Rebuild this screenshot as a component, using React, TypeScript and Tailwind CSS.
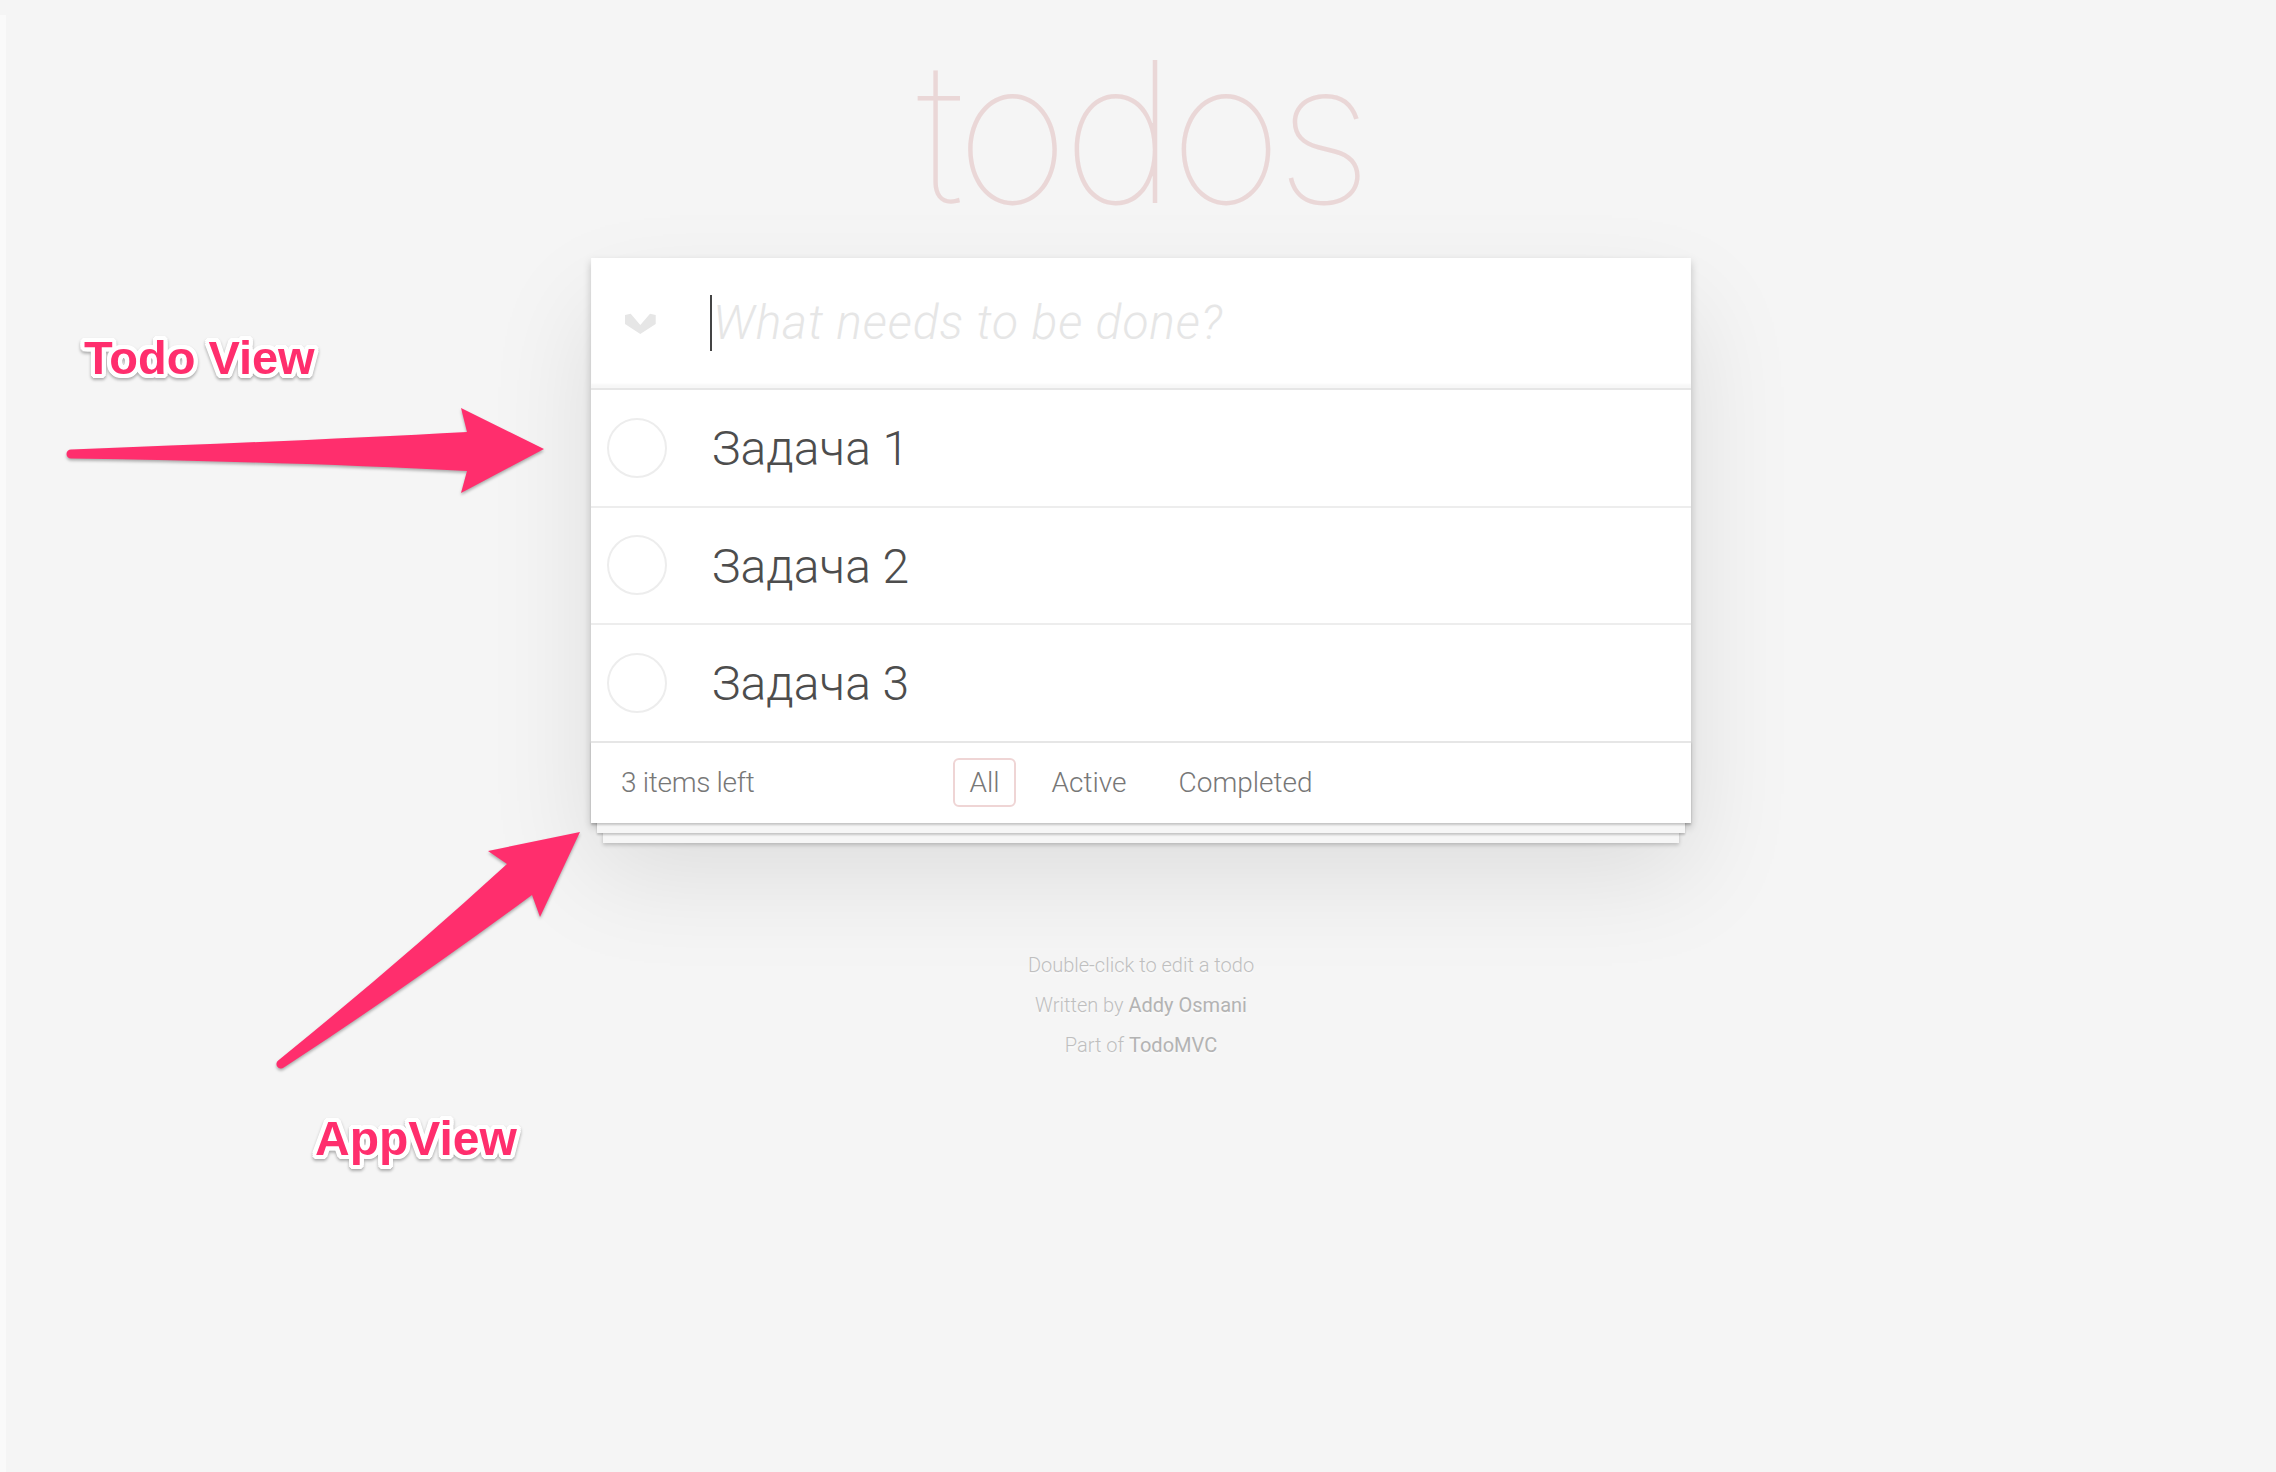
import React from "react";

function Chevron() {
  return (
    <svg width="31" height="21" viewBox="0 0 31 21" className="block">
      <polygon
        points="0,2 5.7,0.7 15.3,12 25,0.7 30.7,2 30.7,11 15.3,21 0,11"
        fill="#e6e6e6"
      />
    </svg>
  );
}

function Annotations() {
  return (
    <svg
      width="2276"
      height="1472"
      viewBox="0 0 2276 1472"
      className="pointer-events-none absolute left-0 top-0 drop-shadow-[0_2px_1.5px_rgba(0,0,0,0.3)]"
    >
      <path
        d="M71,449.5 Q300,441 467,432 L461,408 L544,449 L461,493 L467,471 Q300,462 71,458.5 A4.5,4.5 0 0 1 71,449.5 Z"
        fill="#ff2e6d"
      />
      <path
        d="M278.2,1060.4 Q400,962 507,864 L488,851 L580,832 L540,917 L532,895 Q410,985 283.8,1067.6 A4.5,4.5 0 0 1 278.2,1060.4 Z"
        fill="#ff2e6d"
      />
    </svg>
  );
}

const labelCls =
  "absolute font-['Liberation_Sans',Arial,sans-serif] font-bold leading-none text-[#ff2e6d] whitespace-nowrap drop-shadow-[0_2px_1.5px_rgba(0,0,0,0.3)] [text-shadow:4px_0_0_#fff,-4px_0_0_#fff,0_4px_0_#fff,0_-4px_0_#fff,3px_3px_0_#fff,-3px_3px_0_#fff,3px_-3px_0_#fff,-3px_-3px_0_#fff,4px_2px_0_#fff,-4px_2px_0_#fff,4px_-2px_0_#fff,-4px_-2px_0_#fff,2px_4px_0_#fff,-2px_4px_0_#fff,2px_-4px_0_#fff,-2px_-4px_0_#fff]";

export default function App() {
  const todos = ["Задача 1", "Задача 2", "Задача 3"];
  return (
    <div className="relative flex min-h-[1472px] w-full overflow-hidden bg-[#f5f5f5] font-['Roboto',sans-serif] font-light">
      <div className="mt-[15px] w-[6px] shrink-0 bg-[#fafafa]" />
      <main className="flex flex-1 flex-col items-center pt-[32px]">
        <h1 className="h-[200px] font-['Inter',sans-serif] text-[196px] font-thin leading-[200px] tracking-[-7px] text-[#ead7d7]">
          todos
        </h1>
        <section className="mt-[26px] w-[1100px] bg-white shadow-[0_4px_8px_0_rgba(0,0,0,0.2),0_50px_100px_0_rgba(0,0,0,0.1)]">
          <header className="flex h-[130px] items-center pl-[34px] shadow-[inset_0_-4px_2px_rgba(0,0,0,0.03)]">
            <Chevron />
            <div className="ml-[54px] flex items-center">
              <span className="block h-[56px] w-[2px] bg-[#444]" />
              <span className="ml-[1px] text-[48px] font-light italic tracking-[0.9px] text-[#e6e6e6]">
                What needs to be done?
              </span>
            </div>
          </header>
          <ul className="border-t-2 border-[#e6e6e6]">
            {todos.map((t, i) => (
              <li
                key={t}
                className={
                  i < todos.length - 1
                    ? "flex h-[117.6px] items-center border-b-2 border-[#ededed]"
                    : "flex h-[115.6px] items-center"
                }
              >
                <span className="ml-[16px] block h-[60px] w-[60px] rounded-full border-2 border-[#ededed]" />
                <span className="ml-[45px] mt-[3px] text-[48px] font-light text-[#4d4d4d]">{t}</span>
              </li>
            ))}
          </ul>
          <footer className="grid h-[82px] grid-cols-[1fr_auto_1fr] items-center border-t-2 border-[#e6e6e6] px-[30px] text-[28px] text-[#777] shadow-[0_2px_2px_rgba(0,0,0,0.2),0_16px_0_-6px_#f6f6f6,0_18px_2px_-6px_rgba(0,0,0,0.2),0_32px_0_-12px_#f6f6f6,0_34px_4px_-12px_rgba(0,0,0,0.2)]">
            <span className="tracking-[-0.3px]">3 items left</span>
            <ul className="flex items-center gap-[20px]">
              <li className="flex h-[49px] items-center rounded-[6px] border-2 border-[#efd5d5] px-[14px]">All</li>
              <li className="flex h-[49px] items-center rounded-[6px] border-2 border-transparent px-[14px]">Active</li>
              <li className="flex h-[49px] items-center rounded-[6px] border-2 border-transparent px-[14px]">Completed</li>
            </ul>
            <span />
          </footer>
        </section>
        <div className="mt-[132px] flex flex-col items-center gap-[20px] text-[20px] leading-[20px] text-[#bfbfbf] [text-shadow:0_2px_0_rgba(255,255,255,0.5)]">
          <p>Double-click to edit a todo</p>
          <p>
            Written by <a className="font-normal text-[#b3b3b3]">Addy Osmani</a>
          </p>
          <p>
            Part of <a className="font-normal text-[#b3b3b3]">TodoMVC</a>
          </p>
        </div>
      </main>
      <Annotations />
      <div className={labelCls + " left-[84px] top-[334px] text-[47px]"}>Todo View</div>
      <div className={labelCls + " left-[315px] top-[1115px] text-[48px]"}>AppView</div>
    </div>
  );
}
